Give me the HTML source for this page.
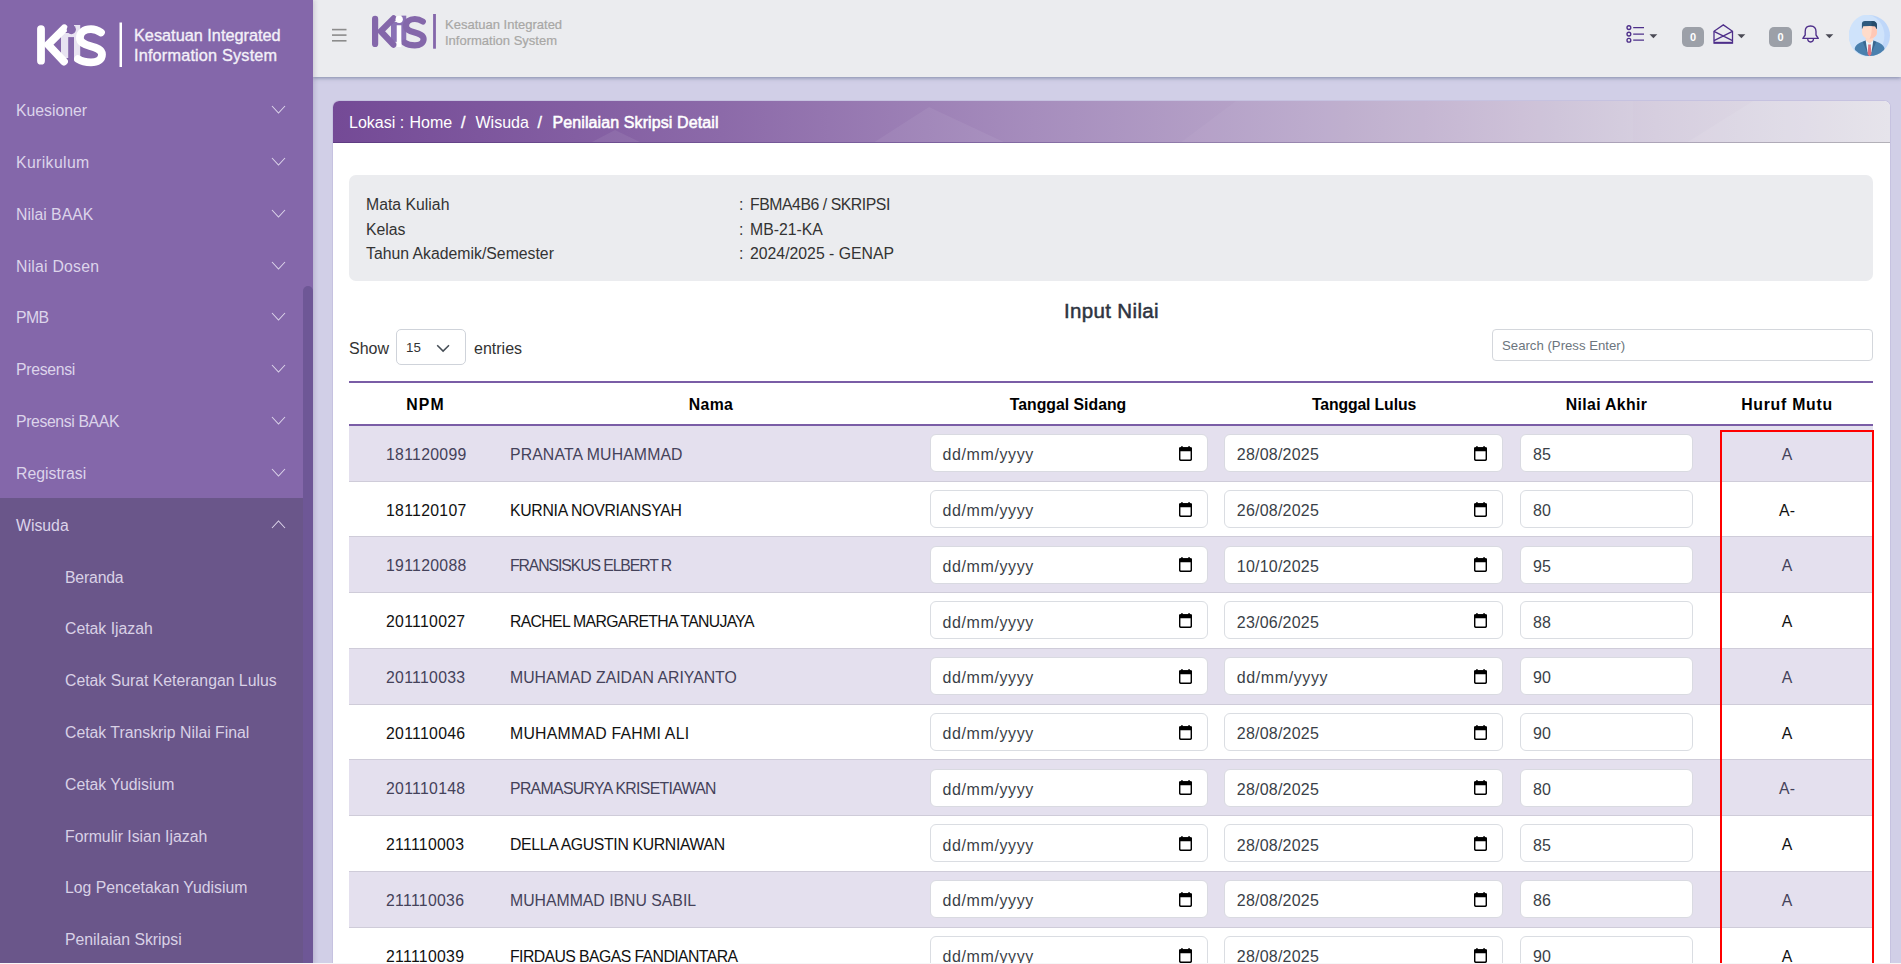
<!DOCTYPE html>
<html><head><meta charset="utf-8">
<style>
*{box-sizing:border-box;margin:0;padding:0}
html,body{width:1901px;height:964px;overflow:hidden}
body{background:#D1CFE7;font-family:"Liberation Sans",sans-serif;position:relative}
.abs{position:absolute}
#sb{position:absolute;left:0;top:0;width:313px;height:964px;background:#8467AA;box-shadow:2px 0 4px rgba(60,40,90,.15);z-index:5;overflow:hidden}
#sb .logo-t{position:absolute;left:134px;color:#F3F0F8;font-size:16.3px;white-space:nowrap;-webkit-text-stroke:0.35px #F3F0F8}
.mi{position:absolute;left:16px;color:#DCD4EA;font-size:15.8px;white-space:nowrap}
.chev{position:absolute;left:271px;width:14px;height:8px}
.sub{position:absolute;left:65px;color:#D9D1E6;font-size:15.8px;white-space:nowrap}
#act{position:absolute;left:0;top:498px;width:313px;height:470px;background:#6A568A}
#thumb{position:absolute;left:303px;top:286px;width:10px;height:700px;background:#6E5796;border-radius:5px 5px 0 0}
#tb{position:absolute;left:313px;top:0;width:1588px;height:77px;background:#EBECEF;box-shadow:0 1px 4px rgba(75,90,125,.6);z-index:3}
#card{position:absolute;left:333px;top:101px;width:1557px;height:900px;background:#fff;border-radius:6px 6px 0 0;overflow:hidden;box-shadow:0 0 0 1px rgba(120,110,170,.12)}
#bcb{position:absolute;left:0;top:41px;width:1557px;height:1.2px;background:linear-gradient(90deg,#5E3B82 0%,#7E64A0 40%,#A89CB8 75%,#B3B1B8 100%)}
#bc{position:absolute;left:0;top:0;width:1557px;height:42px;background:linear-gradient(90deg,#744A96 0%,#8C6AA9 25%,#A68DBD 45%,#C3B4D1 70%,#D6CEDF 85%,#E4E2EA 100%);border-bottom:none}
#bc .t{position:absolute;top:13px;color:#fff;font-size:16px;white-space:nowrap}
#info{position:absolute;left:16px;top:74px;width:1524px;height:106px;background:#EBECEF;border-radius:7px}
.il{position:absolute;left:17px;color:#333;font-size:15.8px;white-space:nowrap}
.ic{position:absolute;left:390px;color:#333;font-size:15.8px;white-space:nowrap}
.iv{position:absolute;left:401px;color:#333;font-size:15.8px;white-space:nowrap}

#title{position:absolute;left:0;width:1557px;top:197.8px;text-align:center;color:#2E3441;font-size:20.5px;-webkit-text-stroke:0.5px #2E3441;letter-spacing:0.35px}
.lbl{position:absolute;color:#333;font-size:16px;white-space:nowrap}
#sel{position:absolute;left:63px;top:228px;width:70px;height:36px;border:1px solid #CFD3DA;border-radius:5px;background:#fff}
#sel span{position:absolute;left:9px;top:9.6px;font-size:13.3px;color:#333}
#srch{position:absolute;left:1159px;top:228px;width:381px;height:32px;border:1px solid #D4D7DC;border-radius:4px;background:#fff}
#srch span{position:absolute;left:9px;top:8px;font-size:13.2px;color:#6C757D;white-space:nowrap}
#tbl-top{position:absolute;left:16px;top:280px;width:1524px;height:2px;background:#7A5DA6}
#tbl-hb{position:absolute;left:16px;top:323px;width:1524px;height:2px;background:#7A5DA6}
.th{position:absolute;top:295.3px;font-size:15.8px;font-weight:bold;color:#000;white-space:nowrap;transform:translateX(-50%)}
.row{position:absolute;left:16px;width:1524px;height:55.75px;border-bottom:1px solid #CFCCD9;background:#fff;color:#111}
.row.st{background:#E4E0EE;color:#44425A}
.row .npm{position:absolute;left:37px;top:20px;font-size:15.8px;letter-spacing:0.3px;white-space:nowrap}
.row .nm{position:absolute;left:161px;top:20px;font-size:15.8px;white-space:nowrap}
.inp{position:absolute;top:8.3px;height:38px;background:#fff;border:1px solid #DADDE2;border-radius:6px}
.row.st .inp{border-color:#D9DAE1}
.inp span{position:absolute;left:12px;top:11.3px;font-size:16px;letter-spacing:0.22px;color:#3A3F48;white-space:nowrap}
.inp.d1{left:580.5px;width:278.5px}
.inp.d2{left:874.8px;width:279px}
.inp.d3{left:1171px;width:172.5px}
.inp .cal{position:absolute;right:15px;top:10.9px}
.row .hm{position:absolute;left:1352px;width:172px;top:20px;text-align:center;font-size:15.8px;white-space:nowrap}
#red{position:absolute;left:1386.5px;top:329px;width:154px;height:535px;border:2px solid #FF0000;z-index:4}

.badge{position:absolute;top:27px;width:22px;height:20px;background:#9CA0A8;border-radius:5px}
.badge span{position:absolute;left:0;right:0;top:4px;text-align:center;color:#fff;font-size:11px;font-weight:bold}
</style></head>
<body>
<!-- SIDEBAR -->
<div id="sb">
  <div id="act"></div>
  <svg class="abs" style="left:0;top:0" width="313" height="84" viewBox="0 0 313 84">
      <rect x="61" y="33" width="19.2" height="25" fill="#E8E3F1"/>
      <rect x="74" y="25" width="6.2" height="8" fill="#E8E3F1"/>
      <rect x="37.1" y="25.2" width="7.8" height="39.4" rx="3.9" fill="#fff"/>
      <path d="M64.3 28.4 L48.1 44.6 L64 61.5" fill="none" stroke="#fff" stroke-width="7.8" stroke-linecap="round" stroke-linejoin="miter"/>
      <path d="M101 32.4 C97 29.8 94 29.2 91 29.2 C84 29.2 79.9 32.5 79.9 38 C79.9 42.5 84 44.2 90 46 C97 48 102 49.5 102 54.5 C102 59.5 97.5 62.4 91 62.4 C85 62.4 81 61 77.9 59" fill="none" stroke="#fff" stroke-width="7.8" stroke-linecap="round"/>
      <rect x="68.2" y="37.1" width="5.8" height="27.3" fill="#8467AA"/>
      <circle cx="71.3" cy="29.6" r="4.6" fill="#8467AA"/>
      <rect x="119.5" y="22.5" width="2.5" height="44.5" fill="#fff"/>
  </svg>
  <div class="logo-t" style="top:26px">Kesatuan Integrated</div>
  <div class="logo-t" style="top:46px;letter-spacing:0.17px">Information System</div>

  <div class="mi" style="top:102px">Kuesioner</div>
  <div class="mi" style="top:154px;letter-spacing:0.38px">Kurikulum</div>
  <div class="mi" style="top:206px">Nilai BAAK</div>
  <div class="mi" style="top:258px;letter-spacing:0.22px">Nilai Dosen</div>
  <div class="mi" style="top:309px;letter-spacing:-0.6px">PMB</div>
  <div class="mi" style="top:361px;letter-spacing:-0.3px">Presensi</div>
  <div class="mi" style="top:413px;letter-spacing:-0.38px">Presensi BAAK</div>
  <div class="mi" style="top:465px">Registrasi</div>
  <div class="mi" style="top:517px">Wisuda</div>
  <div class="sub" style="top:569px;letter-spacing:-0.18px">Beranda</div>
  <div class="sub" style="top:620px">Cetak Ijazah</div>
  <div class="sub" style="top:672px">Cetak Surat Keterangan Lulus</div>
  <div class="sub" style="top:724px">Cetak Transkrip Nilai Final</div>
  <div class="sub" style="top:776px">Cetak Yudisium</div>
  <div class="sub" style="top:828px">Formulir Isian Ijazah</div>
  <div class="sub" style="top:879px">Log Pencetakan Yudisium</div>
  <div class="sub" style="top:931px">Penilaian Skripsi</div>
  <svg class="abs" style="left:0;top:0" width="313" height="964">
    <g fill="none" stroke="#DCD4EA" stroke-width="1.05">
      <path d="M272 106 L278.5 113 L285 106"/>
      <path d="M272 158 L278.5 165 L285 158"/>
      <path d="M272 210 L278.5 217 L285 210"/>
      <path d="M272 262 L278.5 269 L285 262"/>
      <path d="M272 313 L278.5 320 L285 313"/>
      <path d="M272 365 L278.5 372 L285 365"/>
      <path d="M272 417 L278.5 424 L285 417"/>
      <path d="M272 469 L278.5 476 L285 469"/>
      <path d="M272 528 L278.5 521 L285 528"/>
    </g>
  </svg>
  <div id="thumb"></div>
</div>

<!-- TOPBAR -->
<div id="tb">
  <svg class="abs" style="left:19px;top:28px" width="15" height="14" viewBox="0 0 15 14"><g fill="#8C8C8C"><rect x="0" y="0.8" width="14.5" height="1.6"/><rect x="0" y="6.3" width="14.5" height="1.6"/><rect x="0" y="12" width="14.5" height="1.6"/></g></svg>
  <svg class="abs" style="left:0;top:0" width="260" height="77" viewBox="313 0 260 77">
    <g transform="translate(372 15.8) scale(0.795) translate(-37.1 -25.2)">
      <rect x="61" y="33" width="19.2" height="25" fill="#8A72B5"/>
      <rect x="74" y="25" width="6.2" height="8" fill="#8A72B5"/>
      <rect x="37.1" y="25.2" width="7.8" height="39.4" rx="3.9" fill="#8467AA"/>
      <path d="M64.3 28.4 L48.1 44.6 L64 61.5" fill="none" stroke="#8467AA" stroke-width="7.8" stroke-linecap="round" stroke-linejoin="miter"/>
      <path d="M101 32.4 C97 29.8 94 29.2 91 29.2 C84 29.2 79.9 32.5 79.9 38 C79.9 42.5 84 44.2 90 46 C97 48 102 49.5 102 54.5 C102 59.5 97.5 62.4 91 62.4 C85 62.4 81 61 77.9 59" fill="none" stroke="#8467AA" stroke-width="7.8" stroke-linecap="round"/>
      <rect x="68.2" y="37.1" width="5.8" height="27.3" fill="#fff"/>
      <circle cx="71.3" cy="29.6" r="4.6" fill="#fff"/>
    </g>
    <rect x="433.1" y="14" width="2.8" height="34.7" fill="#8467AA"/>
  </svg>
  <div class="abs" style="left:132px;top:17px;color:#A8A7A5;font-size:13px;line-height:16px;white-space:nowrap;-webkit-text-stroke:0.2px #A8A7A5">Kesatuan Integrated<br>Information System</div>
  <!-- right icons -->
  <svg class="abs" style="left:1313px;top:24px" width="20" height="20" viewBox="0 0 20 20" fill="none" stroke="#4E2F8A" stroke-width="1.35">
    <circle cx="2.9" cy="3.6" r="1.9"/><circle cx="2.9" cy="10.1" r="1.9"/><circle cx="2.9" cy="16.2" r="1.9"/>
    <path d="M7.2 3.6H18M7.2 10.1H18M7.2 16.2H18" stroke-width="1.3"/>
  </svg>
  <svg class="abs" style="left:1336px;top:33.6px" width="9" height="6" viewBox="0 0 9 6"><path d="M0.5 0.3H8.3L4.4 4.3Z" fill="#4A4A55"/></svg>
  <div class="badge" style="left:1369px"><span>0</span></div>
  <svg class="abs" style="left:1400px;top:24px" width="21" height="21" viewBox="0 0 21 21" fill="none" stroke="#4E2F8A" stroke-width="1.3">
    <path d="M1 19.2 V7.3 L10.3 0.9 L19.5 7.3 V19.2 Z"/><path d="M1 7.3 L19.5 16.6 M19.5 7.3 L1 16.6"/><path d="M1 18.6 H19.5" stroke-width="1.6"/>
  </svg>
  <svg class="abs" style="left:1424px;top:33.6px" width="9" height="6" viewBox="0 0 9 6"><path d="M0.5 0.3H8.3L4.4 4.3Z" fill="#4A4A55"/></svg>
  <div class="badge" style="left:1456px;width:23px"><span>0</span></div>
  <svg class="abs" style="left:1488px;top:24px" width="19" height="20" viewBox="0 0 19 20" fill="none" stroke="#4E2F8A" stroke-width="1.35">
    <path d="M1.9 14.4 L4.2 11 V7.6 Q4.2 2 9.6 2 Q15 2 15 7.6 V11 L17.3 14.4 Z" stroke-linejoin="round"/><path d="M6.7 14.6 Q6.7 18 9.6 18 Q12.5 18 12.5 14.6"/>
  </svg>
  <svg class="abs" style="left:1512px;top:33.6px" width="9" height="6" viewBox="0 0 9 6"><path d="M0.5 0.3H8.3L4.4 4.3Z" fill="#4A4A55"/></svg>
  <svg class="abs" style="left:1536px;top:15px" width="42" height="42" viewBox="0 0 42 42">
    <defs><clipPath id="cc"><circle cx="20.5" cy="20.6" r="20.5"/></clipPath></defs>
    <circle cx="20.5" cy="20.6" r="20.5" fill="#BFD7F9"/>
    <ellipse cx="17.6" cy="20.6" rx="17.8" ry="20.8" fill="#CFE3FB"/>
    <g clip-path="url(#cc)">
      <path d="M5.5 42 L5.8 33 Q7 28.5 14 26.5 L16.5 25.6 L24.5 25.6 L27 26.5 Q34 28.5 35.4 33 L35.6 42 Z" fill="#4A80AE"/>
      <path d="M16.5 25.6 L13.8 27 L19.8 41 Z" fill="#3A6790"/>
      <path d="M24.5 25.6 L27.2 27 L21.2 41 Z" fill="#3A6790"/>
      <path d="M16.7 25.6 L24.3 25.6 L22.5 37 L20.5 40 L18.5 37 Z" fill="#EAF6FC"/>
      <path d="M16.7 21 H24.3 V25.6 L20.5 28.5 L16.7 25.6 Z" fill="#FFD9C8"/>
      <path d="M19.1 29.6 L21.9 29.6 L21.8 31.6 L22.5 39 L20.5 41.5 L18.5 39 L19.2 31.6 Z" fill="#E0737E"/>
      <path d="M13.1 12 Q13.1 10.5 14.5 10.5 H26.5 Q27.9 10.5 27.9 12 V17.5 Q27.9 21 24.5 22.8 L20.5 24 L16.5 22.8 Q13.1 21 13.1 17.5 Z" fill="#FFDCCB"/>
      <path d="M22.7 10.5 H26.5 Q27.9 10.5 27.9 12 V17.5 Q27.9 21 24.5 22.8 L20.5 24 Q22.7 20 22.7 15 Z" fill="#FFC8B6"/>
      <path d="M12.9 14.2 V9 Q12.9 5.9 16 5.9 H24 Q26 5.9 27 7.5 Q27.9 8.5 27.9 10 V14.2 Q26.8 13 26.3 11.3 Q24 11 20.5 11 Q16 11 14.3 11.3 Q13.8 13 12.9 14.2 Z" fill="#2F5A7D"/>
      <path d="M22.5 5.9 H24 Q26 5.9 27 7.5 Q27.9 8.5 27.9 10 V14.2 Q26.8 13 26.3 11.3 Q25 11 22.5 11 Z" fill="#264C6C"/>
    </g>
  </svg>
</div>

<!-- CARD -->
<div id="card">
  <div id="bc">
    <svg class="abs" style="left:0;top:0" width="1557" height="42">
      <polygon points="540,42 596,6 673,42" fill="#fff" opacity="0.06"/>
      <polygon points="257,42 282,29 309,42" fill="#fff" opacity="0.07"/>
      <polygon points="847,42 903,0 1300,0 1300,42" fill="#fff" opacity="0.04"/>
      <polygon points="1353,42 1420,0 1557,0 1557,42" fill="#fff" opacity="0.08"/>
    </svg>
    <div class="t" style="left:16px">Lokasi :</div>
    <div class="t" style="left:76.5px">Home</div>
    <div class="t" style="left:128px;-webkit-text-stroke:0.4px #fff">/</div>
    <div class="t" style="left:142.5px">Wisuda</div>
    <div class="t" style="left:204.5px;-webkit-text-stroke:0.4px #fff">/</div>
    <div class="t" style="left:219.5px;-webkit-text-stroke:0.55px #fff;letter-spacing:0.1px">Penilaian Skripsi Detail</div>
  </div>
  <div id="bcb"></div>
  <div id="info">
    <div class="il" style="top:21px">Mata Kuliah</div>
    <div class="il" style="top:46px">Kelas</div>
    <div class="il" style="top:70px">Tahun Akademik/Semester</div>
    <div class="ic" style="top:21px">:</div>
    <div class="ic" style="top:46px">:</div>
    <div class="ic" style="top:70px">:</div>
    <div class="iv" style="top:21px;letter-spacing:-0.45px">FBMA4B6 / SKRIPSI</div>
    <div class="iv" style="top:46px">MB-21-KA</div>
    <div class="iv" style="top:70px">2024/2025 - GENAP</div>
  </div>

  <div id="title">Input Nilai</div>
  <div class="lbl" style="left:16px;top:239px">Show</div>
  <div id="sel"><span>15</span><svg class="abs" style="left:39px;top:13.5px" width="15" height="9" viewBox="0 0 15 9"><path d="M1.2 1.2 L7.1 7.1 L13 1.2" fill="none" stroke="#454D55" stroke-width="1.5"/></svg></div>
  <div class="lbl" style="left:141px;top:239px">entries</div>
  <div id="srch"><span>Search (Press Enter)</span></div>
  <div id="tbl-top"></div>
  <div class="th" style="left:92.5px;letter-spacing:1.1px">NPM</div>
  <div class="th" style="left:378px;letter-spacing:0.35px">Nama</div>
  <div class="th" style="left:735px">Tanggal Sidang</div>
  <div class="th" style="left:1031px;letter-spacing:-0.14px">Tanggal Lulus</div>
  <div class="th" style="left:1273.5px;letter-spacing:0.35px">Nilai Akhir</div>
  <div class="th" style="left:1454px;letter-spacing:0.75px">Huruf Mutu</div>
  <div id="tbl-hb"></div>
<div class="row st" style="top:324.80px"><div class="npm">181120099</div><div class="nm" style="letter-spacing:0.13px">PRANATA MUHAMMAD</div><div class="inp d1"><span style="letter-spacing:0.6px">dd/mm/yyyy</span><svg class="cal" width="13" height="15" viewBox="0 0 13 15"><rect x="0.7" y="2" width="11.6" height="12.3" rx="1.2" fill="none" stroke="#000" stroke-width="1.45"/><rect x="0" y="1.3" width="13" height="3.9" rx="1" fill="#000"/><rect x="2.3" y="0" width="1.3" height="2" fill="#000"/><rect x="9.4" y="0" width="1.3" height="2" fill="#000"/></svg></div><div class="inp d2"><span>28/08/2025</span><svg class="cal" width="13" height="15" viewBox="0 0 13 15"><rect x="0.7" y="2" width="11.6" height="12.3" rx="1.2" fill="none" stroke="#000" stroke-width="1.45"/><rect x="0" y="1.3" width="13" height="3.9" rx="1" fill="#000"/><rect x="2.3" y="0" width="1.3" height="2" fill="#000"/><rect x="9.4" y="0" width="1.3" height="2" fill="#000"/></svg></div><div class="inp d3"><span>85</span></div><div class="hm">A</div></div>
<div class="row" style="top:380.55px"><div class="npm">181120107</div><div class="nm" style="letter-spacing:-0.3px">KURNIA NOVRIANSYAH</div><div class="inp d1"><span style="letter-spacing:0.6px">dd/mm/yyyy</span><svg class="cal" width="13" height="15" viewBox="0 0 13 15"><rect x="0.7" y="2" width="11.6" height="12.3" rx="1.2" fill="none" stroke="#000" stroke-width="1.45"/><rect x="0" y="1.3" width="13" height="3.9" rx="1" fill="#000"/><rect x="2.3" y="0" width="1.3" height="2" fill="#000"/><rect x="9.4" y="0" width="1.3" height="2" fill="#000"/></svg></div><div class="inp d2"><span>26/08/2025</span><svg class="cal" width="13" height="15" viewBox="0 0 13 15"><rect x="0.7" y="2" width="11.6" height="12.3" rx="1.2" fill="none" stroke="#000" stroke-width="1.45"/><rect x="0" y="1.3" width="13" height="3.9" rx="1" fill="#000"/><rect x="2.3" y="0" width="1.3" height="2" fill="#000"/><rect x="9.4" y="0" width="1.3" height="2" fill="#000"/></svg></div><div class="inp d3"><span>80</span></div><div class="hm">A-</div></div>
<div class="row st" style="top:436.30px"><div class="npm">191120088</div><div class="nm" style="letter-spacing:-1.1px">FRANSISKUS ELBERT R</div><div class="inp d1"><span style="letter-spacing:0.6px">dd/mm/yyyy</span><svg class="cal" width="13" height="15" viewBox="0 0 13 15"><rect x="0.7" y="2" width="11.6" height="12.3" rx="1.2" fill="none" stroke="#000" stroke-width="1.45"/><rect x="0" y="1.3" width="13" height="3.9" rx="1" fill="#000"/><rect x="2.3" y="0" width="1.3" height="2" fill="#000"/><rect x="9.4" y="0" width="1.3" height="2" fill="#000"/></svg></div><div class="inp d2"><span>10/10/2025</span><svg class="cal" width="13" height="15" viewBox="0 0 13 15"><rect x="0.7" y="2" width="11.6" height="12.3" rx="1.2" fill="none" stroke="#000" stroke-width="1.45"/><rect x="0" y="1.3" width="13" height="3.9" rx="1" fill="#000"/><rect x="2.3" y="0" width="1.3" height="2" fill="#000"/><rect x="9.4" y="0" width="1.3" height="2" fill="#000"/></svg></div><div class="inp d3"><span>95</span></div><div class="hm">A</div></div>
<div class="row" style="top:492.05px"><div class="npm">201110027</div><div class="nm" style="letter-spacing:-0.68px">RACHEL MARGARETHA TANUJAYA</div><div class="inp d1"><span style="letter-spacing:0.6px">dd/mm/yyyy</span><svg class="cal" width="13" height="15" viewBox="0 0 13 15"><rect x="0.7" y="2" width="11.6" height="12.3" rx="1.2" fill="none" stroke="#000" stroke-width="1.45"/><rect x="0" y="1.3" width="13" height="3.9" rx="1" fill="#000"/><rect x="2.3" y="0" width="1.3" height="2" fill="#000"/><rect x="9.4" y="0" width="1.3" height="2" fill="#000"/></svg></div><div class="inp d2"><span>23/06/2025</span><svg class="cal" width="13" height="15" viewBox="0 0 13 15"><rect x="0.7" y="2" width="11.6" height="12.3" rx="1.2" fill="none" stroke="#000" stroke-width="1.45"/><rect x="0" y="1.3" width="13" height="3.9" rx="1" fill="#000"/><rect x="2.3" y="0" width="1.3" height="2" fill="#000"/><rect x="9.4" y="0" width="1.3" height="2" fill="#000"/></svg></div><div class="inp d3"><span>88</span></div><div class="hm">A</div></div>
<div class="row st" style="top:547.80px"><div class="npm">201110033</div><div class="nm" style="letter-spacing:0.0px">MUHAMAD ZAIDAN ARIYANTO</div><div class="inp d1"><span style="letter-spacing:0.6px">dd/mm/yyyy</span><svg class="cal" width="13" height="15" viewBox="0 0 13 15"><rect x="0.7" y="2" width="11.6" height="12.3" rx="1.2" fill="none" stroke="#000" stroke-width="1.45"/><rect x="0" y="1.3" width="13" height="3.9" rx="1" fill="#000"/><rect x="2.3" y="0" width="1.3" height="2" fill="#000"/><rect x="9.4" y="0" width="1.3" height="2" fill="#000"/></svg></div><div class="inp d2"><span style="letter-spacing:0.6px">dd/mm/yyyy</span><svg class="cal" width="13" height="15" viewBox="0 0 13 15"><rect x="0.7" y="2" width="11.6" height="12.3" rx="1.2" fill="none" stroke="#000" stroke-width="1.45"/><rect x="0" y="1.3" width="13" height="3.9" rx="1" fill="#000"/><rect x="2.3" y="0" width="1.3" height="2" fill="#000"/><rect x="9.4" y="0" width="1.3" height="2" fill="#000"/></svg></div><div class="inp d3"><span>90</span></div><div class="hm">A</div></div>
<div class="row" style="top:603.55px"><div class="npm">201110046</div><div class="nm" style="letter-spacing:0.26px">MUHAMMAD FAHMI ALI</div><div class="inp d1"><span style="letter-spacing:0.6px">dd/mm/yyyy</span><svg class="cal" width="13" height="15" viewBox="0 0 13 15"><rect x="0.7" y="2" width="11.6" height="12.3" rx="1.2" fill="none" stroke="#000" stroke-width="1.45"/><rect x="0" y="1.3" width="13" height="3.9" rx="1" fill="#000"/><rect x="2.3" y="0" width="1.3" height="2" fill="#000"/><rect x="9.4" y="0" width="1.3" height="2" fill="#000"/></svg></div><div class="inp d2"><span>28/08/2025</span><svg class="cal" width="13" height="15" viewBox="0 0 13 15"><rect x="0.7" y="2" width="11.6" height="12.3" rx="1.2" fill="none" stroke="#000" stroke-width="1.45"/><rect x="0" y="1.3" width="13" height="3.9" rx="1" fill="#000"/><rect x="2.3" y="0" width="1.3" height="2" fill="#000"/><rect x="9.4" y="0" width="1.3" height="2" fill="#000"/></svg></div><div class="inp d3"><span>90</span></div><div class="hm">A</div></div>
<div class="row st" style="top:659.30px"><div class="npm">201110148</div><div class="nm" style="letter-spacing:-0.66px">PRAMASURYA KRISETIAWAN</div><div class="inp d1"><span style="letter-spacing:0.6px">dd/mm/yyyy</span><svg class="cal" width="13" height="15" viewBox="0 0 13 15"><rect x="0.7" y="2" width="11.6" height="12.3" rx="1.2" fill="none" stroke="#000" stroke-width="1.45"/><rect x="0" y="1.3" width="13" height="3.9" rx="1" fill="#000"/><rect x="2.3" y="0" width="1.3" height="2" fill="#000"/><rect x="9.4" y="0" width="1.3" height="2" fill="#000"/></svg></div><div class="inp d2"><span>28/08/2025</span><svg class="cal" width="13" height="15" viewBox="0 0 13 15"><rect x="0.7" y="2" width="11.6" height="12.3" rx="1.2" fill="none" stroke="#000" stroke-width="1.45"/><rect x="0" y="1.3" width="13" height="3.9" rx="1" fill="#000"/><rect x="2.3" y="0" width="1.3" height="2" fill="#000"/><rect x="9.4" y="0" width="1.3" height="2" fill="#000"/></svg></div><div class="inp d3"><span>80</span></div><div class="hm">A-</div></div>
<div class="row" style="top:715.05px"><div class="npm">211110003</div><div class="nm" style="letter-spacing:-0.34px">DELLA AGUSTIN KURNIAWAN</div><div class="inp d1"><span style="letter-spacing:0.6px">dd/mm/yyyy</span><svg class="cal" width="13" height="15" viewBox="0 0 13 15"><rect x="0.7" y="2" width="11.6" height="12.3" rx="1.2" fill="none" stroke="#000" stroke-width="1.45"/><rect x="0" y="1.3" width="13" height="3.9" rx="1" fill="#000"/><rect x="2.3" y="0" width="1.3" height="2" fill="#000"/><rect x="9.4" y="0" width="1.3" height="2" fill="#000"/></svg></div><div class="inp d2"><span>28/08/2025</span><svg class="cal" width="13" height="15" viewBox="0 0 13 15"><rect x="0.7" y="2" width="11.6" height="12.3" rx="1.2" fill="none" stroke="#000" stroke-width="1.45"/><rect x="0" y="1.3" width="13" height="3.9" rx="1" fill="#000"/><rect x="2.3" y="0" width="1.3" height="2" fill="#000"/><rect x="9.4" y="0" width="1.3" height="2" fill="#000"/></svg></div><div class="inp d3"><span>85</span></div><div class="hm">A</div></div>
<div class="row st" style="top:770.80px"><div class="npm">211110036</div><div class="nm" style="letter-spacing:0.0px">MUHAMMAD IBNU SABIL</div><div class="inp d1"><span style="letter-spacing:0.6px">dd/mm/yyyy</span><svg class="cal" width="13" height="15" viewBox="0 0 13 15"><rect x="0.7" y="2" width="11.6" height="12.3" rx="1.2" fill="none" stroke="#000" stroke-width="1.45"/><rect x="0" y="1.3" width="13" height="3.9" rx="1" fill="#000"/><rect x="2.3" y="0" width="1.3" height="2" fill="#000"/><rect x="9.4" y="0" width="1.3" height="2" fill="#000"/></svg></div><div class="inp d2"><span>28/08/2025</span><svg class="cal" width="13" height="15" viewBox="0 0 13 15"><rect x="0.7" y="2" width="11.6" height="12.3" rx="1.2" fill="none" stroke="#000" stroke-width="1.45"/><rect x="0" y="1.3" width="13" height="3.9" rx="1" fill="#000"/><rect x="2.3" y="0" width="1.3" height="2" fill="#000"/><rect x="9.4" y="0" width="1.3" height="2" fill="#000"/></svg></div><div class="inp d3"><span>86</span></div><div class="hm">A</div></div>
<div class="row" style="top:826.55px"><div class="npm">211110039</div><div class="nm" style="letter-spacing:-0.58px">FIRDAUS BAGAS FANDIANTARA</div><div class="inp d1"><span style="letter-spacing:0.6px">dd/mm/yyyy</span><svg class="cal" width="13" height="15" viewBox="0 0 13 15"><rect x="0.7" y="2" width="11.6" height="12.3" rx="1.2" fill="none" stroke="#000" stroke-width="1.45"/><rect x="0" y="1.3" width="13" height="3.9" rx="1" fill="#000"/><rect x="2.3" y="0" width="1.3" height="2" fill="#000"/><rect x="9.4" y="0" width="1.3" height="2" fill="#000"/></svg></div><div class="inp d2"><span>28/08/2025</span><svg class="cal" width="13" height="15" viewBox="0 0 13 15"><rect x="0.7" y="2" width="11.6" height="12.3" rx="1.2" fill="none" stroke="#000" stroke-width="1.45"/><rect x="0" y="1.3" width="13" height="3.9" rx="1" fill="#000"/><rect x="2.3" y="0" width="1.3" height="2" fill="#000"/><rect x="9.4" y="0" width="1.3" height="2" fill="#000"/></svg></div><div class="inp d3"><span>90</span></div><div class="hm">A</div></div>
  <div id="red"></div>
</div>
<div class="abs" style="left:0;top:963px;width:1901px;height:1px;background:#F7F7F8;z-index:20"></div>
</body></html>
